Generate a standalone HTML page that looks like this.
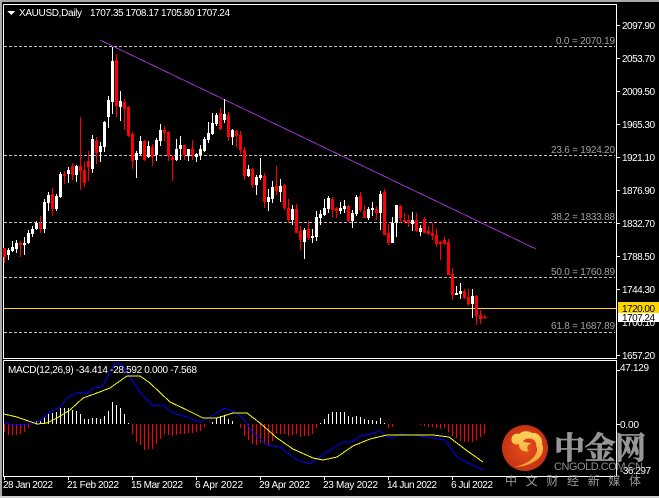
<!DOCTYPE html>
<html><head><meta charset="utf-8"><title>XAUUSD Daily</title>
<style>
html,body{margin:0;padding:0;background:#000;width:659px;height:498px;overflow:hidden}
svg{display:block}
text{font-family:"Liberation Sans","DejaVu Sans",sans-serif;font-size:10px;fill:#fff}
.f{fill:#a0a0a0}
.c{fill:#969696;stroke:#969696;stroke-width:.7px;font-family:"Noto Serif CJK SC","Noto Sans CJK SC",serif;font-weight:700}
</style></head><body>
<svg width="659" height="498" viewBox="0 0 659 498" xmlns="http://www.w3.org/2000/svg">
<rect width="659" height="498" fill="#000"/>
<g shape-rendering="crispEdges" fill="none">
<rect x="0" y="0" width="659" height="2" fill="#a8a8a8"/>
<rect x="0" y="0" width="2" height="498" fill="#a8a8a8"/>
<rect x="0" y="496" width="659" height="2" fill="#d0d0d0"/>
<path stroke="#fff" d="M3.5 4.5H616.5V358.5H3.5V4.5M3.5 360.5H616.5V476.5H3.5V360.5"/>
<path stroke="#fff" d="M617 25.5h3M617 58.5h3M617 91.5h3M617 124.5h3M617 157.5h3M617 190.5h3M617 223.5h3M617 256.5h3M617 289.5h3M617 355.5h3M617 370.5h3M617 424.5h3M4.5 477v3M68.5 477v3M132.5 477v3M196.5 477v3M260.5 477v3M324.5 477v3M388.5 477v3M452.5 477v3"/>
<path stroke="#c0c0c0" stroke-dasharray="3 2" d="M4 46.5H615M4 155.5H615M4 222.5H615M4 277.5H615M4 332.5H615"/>
<path stroke="#ffd700" d="M4 308.5H616"/>
<path stroke="#9932cc" d="M100 40L536 249"/>
<!-- white wicks -->
<path stroke="#fff" d="M8.5 248V260M12.5 241V252M16.5 240V253M24.5 237V255M28.5 230V244M32.5 226V237M36.5 221V230M44.5 199V233M48.5 192V211M56.5 194V211M60.5 172V198M68.5 167V183M76.5 165V182M92.5 135V173M100.5 142V162M104.5 121V152M108.5 96V128M112.5 47V114M120.5 91V121M136.5 151V178M140.5 136V155M148.5 141V158M156.5 138V161M160.5 124V146M176.5 139V161M180.5 136V160M188.5 149V161M196.5 153V162M200.5 145V160M204.5 137V152M208.5 122V143M212.5 113V135M216.5 113V126M224.5 99V123M232.5 129V145M248.5 165V177M256.5 175V195M260.5 158V180M268.5 189V211M272.5 181V203M280.5 179V202M292.5 205V225M304.5 228V259M312.5 229V243M316.5 211V241M320.5 210V225M324.5 199V216M328.5 196V213M340.5 202V214M344.5 200V213M352.5 210V228M356.5 195V216M368.5 207V220M372.5 202V216M380.5 191V230M392.5 217V243M396.5 205V237M412.5 212V231M420.5 225V236M456.5 286V295M460.5 283V299M472.5 289V318"/>
<!-- white bodies -->
<path stroke="#fff" stroke-width="3" d="M8.5 250V255M12.5 247V251M16.5 243V249M24.5 243V245M28.5 233V243M32.5 229V234M36.5 223V229M44.5 202V229M48.5 195V203M56.5 196V209M60.5 174V197M68.5 170V174M76.5 166V175M92.5 139V169M100.5 146V152M104.5 122V147M108.5 100V117M112.5 61V102M120.5 101V107M136.5 153V160M140.5 141V154M148.5 146V157M156.5 140V155M160.5 130V141M176.5 149V160M180.5 145V149M188.5 149V156M196.5 154V157M200.5 149V155M204.5 139V151M208.5 133V140M212.5 123V134M216.5 115V124M224.5 114V120M232.5 130V137M248.5 169V176M256.5 177V185M260.5 175V178M268.5 197V202M272.5 187V199M280.5 186V192M292.5 209V220M304.5 230V242M312.5 236V238M316.5 217V237M320.5 214V218M324.5 208V215M328.5 198V209M340.5 208V211M344.5 206V209M352.5 213V221M356.5 197V214M368.5 209V218M372.5 208V210M380.5 194V213M392.5 223V243M396.5 205V223M412.5 220V224M420.5 228V232M456.5 293V295M460.5 291V294M472.5 296V304"/>
<!-- red wicks -->
<path stroke="#f00" d="M4.5 248V263M20.5 241V257M40.5 216V233M52.5 188V216M64.5 171V184M72.5 163V180M80.5 117V190M84.5 162V187M88.5 151V181M96.5 137V164M116.5 54V117M124.5 99V130M128.5 106V137M132.5 132V169M144.5 140V161M152.5 144V166M164.5 126V141M168.5 131V161M172.5 156V181M184.5 145V160M192.5 140V160M220.5 108V130M228.5 112V141M236.5 130V147M240.5 131V154M244.5 147V180M252.5 168V188M264.5 173V208M276.5 166V195M284.5 184V210M288.5 199V223M296.5 204V233M300.5 226V250M308.5 221V240M332.5 197V217M336.5 207V218M348.5 205V222M360.5 192V212M364.5 205V218M376.5 206V220M384.5 189V235M388.5 224V245M400.5 205V223M404.5 213V223M408.5 215V227M416.5 213V232M424.5 217V233M428.5 226V235M432.5 223V240M436.5 229V247M440.5 241V260M444.5 237V245M448.5 239V275M452.5 268V300M464.5 289V299M468.5 289V306M476.5 295V325M480.5 310V324M484.5 315V319"/>
<!-- red bodies -->
<path stroke="#f00" stroke-width="3" d="M4.5 248V257M20.5 243V245M40.5 223V229M52.5 194V209M64.5 174V176M72.5 166V175M80.5 166V171M84.5 170V183M88.5 161V167M96.5 141V153M116.5 60V106M124.5 102V109M128.5 107V136M132.5 134V161M144.5 141V160M152.5 147V157M164.5 130V133M168.5 132V156M172.5 157V160M184.5 145V155M192.5 149V155M220.5 113V129M228.5 115V137M236.5 131V136M240.5 135V150M244.5 150V176M252.5 169V185M264.5 176V202M276.5 186V191M284.5 185V208M288.5 208V220M296.5 209V233M300.5 231V240M308.5 229V238M332.5 199V210M336.5 208V211M348.5 206V221M360.5 196V210M364.5 211V218M376.5 209V213M384.5 192V235M388.5 233V243M400.5 206V218M404.5 220V222M408.5 220V223M416.5 220V231M424.5 219V233M428.5 231V234M432.5 233V236M436.5 235V244M440.5 242V244M444.5 240V244M448.5 242V275M452.5 274V295M464.5 291V298M468.5 297V304M476.5 296V316M480.5 315V319"/>
<path stroke="#f00" d="M482 317.5h5"/>
<!-- MACD histogram -->
<path stroke="#fff" d="M36.5 424V421M40.5 424V421M44.5 424V417M48.5 424V413M52.5 424V413M56.5 424V412M60.5 424V408M64.5 424V408M68.5 424V408M72.5 424V410M76.5 424V411M80.5 424V414M84.5 424V419M88.5 424V419M92.5 424V418M96.5 424V418M100.5 424V419M104.5 424V416M108.5 424V411M112.5 424V402M116.5 424V405M120.5 424V408M124.5 424V414M128.5 424V423M212.5 424V422M216.5 424V418M220.5 424V416M224.5 424V415M228.5 424V419M232.5 424V421M320.5 424V423M324.5 424V419M328.5 424V414M332.5 424V412M336.5 424V412M340.5 424V412M344.5 424V412M348.5 424V416M352.5 424V417M356.5 424V416M360.5 424V417M364.5 424V419M368.5 424V420M372.5 424V420M376.5 424V421M380.5 424V418M384.5 424V423"/>
<path stroke="#f00" d="M4.5 424V432M8.5 424V435M12.5 424V435M16.5 424V435M20.5 424V434M24.5 424V432M28.5 424V428M132.5 424V434M136.5 424V442M140.5 424V445M144.5 424V450M148.5 424V449M152.5 424V449M156.5 424V444M160.5 424V439M164.5 424V434M168.5 424V435M172.5 424V436M176.5 424V435M180.5 424V434M184.5 424V434M188.5 424V433M192.5 424V433M196.5 424V432M200.5 424V431M204.5 424V427M240.5 424V428M244.5 424V436M248.5 424V440M252.5 424V444M256.5 424V445M260.5 424V443M264.5 424V444M268.5 424V445M272.5 424V441M276.5 424V434M280.5 424V434M284.5 424V434M288.5 424V436M292.5 424V435M296.5 424V434M300.5 424V437M304.5 424V436M308.5 424V436M312.5 424V434M316.5 424V428M388.5 424V428M392.5 424V427M420.5 424V425M424.5 424V426M428.5 424V427M432.5 424V427M436.5 424V428M440.5 424V429M444.5 424V428M448.5 424V432M452.5 424V436M456.5 424V438M460.5 424V441M464.5 424V442M468.5 424V442M472.5 424V442M476.5 424V440M480.5 424V437M484.5 424V434"/>
<!-- MACD lines -->
<path stroke="#0000ff" d="M4 422L12 425L32 424L40 421L50 412L60 407L68 397L80 392L87 394L93 388L102 387L110 372L115 363L122 365L132 380L140 392L153 406L163 405L173 413L187 417L197 421L203 421L213 415L225 408L235 412L243 418L253 433L267 445L280 447L297 460L310 464L327 452L343 442L352 442L360 436L370 434L380 431L387 437L393 438L400 434L413 435L427 437L445 440L457 457L472 465L484 470"/>
<path stroke="#ffff00" d="M4 414L17 417L37 424L47 423L57 418L70 410L83 398L97 393L110 388L127 376L140 376L150 383L170 402L187 410L203 418L217 418L233 413L247 413L260 423L277 438L293 449L313 458L323 460L337 457L353 446L370 439L387 435L433 435L449 437L466 450L483 462"/>
<path d="M7 11h8l-4 4z" fill="#fff"/>
<rect x="618" y="302" width="41" height="11" fill="#ffd700"/>
<rect x="618" y="313" width="41" height="9" fill="#fff"/>
</g>
<text x="19" y="16" textLength="63">XAUUSD,Daily</text>
<text x="90" y="16" textLength="140">1707.35 1708.17 1705.80 1707.24</text>
<text x="622" y="29" textLength="33">2097.90</text>
<text x="622" y="62" textLength="33">2053.70</text>
<text x="622" y="95" textLength="33">2009.50</text>
<text x="622" y="128" textLength="33">1965.30</text>
<text x="622" y="161" textLength="33">1921.10</text>
<text x="622" y="194" textLength="33">1876.90</text>
<text x="622" y="227" textLength="33">1832.70</text>
<text x="622" y="260" textLength="33">1788.50</text>
<text x="622" y="293" textLength="33">1744.30</text>
<text x="622" y="326" textLength="33">1700.10</text>
<rect x="618" y="313" width="41" height="9" fill="#fff"/>
<text x="622" y="359" textLength="33">1657.20</text>
<text x="622" y="312" textLength="33" style="fill:#000">1720.00</text>
<text x="622" y="321" textLength="33" style="fill:#000">1707.24</text>
<text class="f" x="556" y="44" textLength="59">0.0 = 2070.19</text>
<text class="f" x="551" y="153" textLength="64">23.6 = 1924.20</text>
<text class="f" x="551" y="220" textLength="64">38.2 = 1833.88</text>
<text class="f" x="551" y="275" textLength="64">50.0 = 1760.89</text>
<text class="f" x="551" y="329" textLength="64">61.8 = 1687.89</text>
<text x="8" y="373" textLength="189">MACD(12,26,9) -34.414 -28.592 0.000 -7.568</text>
<text x="620" y="371" textLength="29">47.129</text>
<text x="620" y="428" textLength="19">0.00</text>
<text x="620" y="474" textLength="31">-36.297</text>
<text x="3" y="488" textLength="50">28 Jan 2022</text>
<text x="67" y="488" textLength="52">21 Feb 2022</text>
<text x="131" y="488" textLength="52">15 Mar 2022</text>
<text x="195" y="488" textLength="48">6 Apr 2022</text>
<text x="259" y="488" textLength="51">29 Apr 2022</text>
<text x="323" y="488" textLength="55">23 May 2022</text>
<text x="387" y="488" textLength="50">14 Jun 2022</text>
<text x="451" y="488" textLength="42">6 Jul 2022</text>
<!-- watermark -->
<defs><radialGradient id="g" cx="50%" cy="50%" r="55%"><stop offset="0" stop-color="#e8501c"/><stop offset="1" stop-color="#c22f12"/></radialGradient>
<linearGradient id="y" x1="0" y1="0" x2="0" y2="1"><stop offset="0" stop-color="#fbd35c"/><stop offset="1" stop-color="#f7a030"/></linearGradient></defs>
<circle cx="525" cy="448" r="23" fill="url(#g)"/>
<path fill="url(#y)" d="M514 467C525 465 535 459 537 451C538 446 534 443 530 444C527 445 526 449 529 451C524 453 518 449 519 444C514 446 510 442 512 437C513 434 517 433 519 434C522 431 528 430 532 433C538 432 543 438 542 444C545 450 541 458 535 461C529 465 522 467 514 467Z"/>
<path fill="#d8431a" d="M523 441C527 437 534 438 536 443C537 447 535 450 533 452C534 448 533 444 530 443C527 442 525 443 523 441Z"/>
<text class="c" x="554" y="459" style="font-size:31px" textLength="92">中金网</text>
<text x="554" y="470" textLength="89" style="fill:#8c8c8c;font-size:11px">CNGOLD.COM.CN</text>
<text x="505" y="485" style="fill:#999;font-family:'Noto Sans CJK SC',sans-serif;font-size:12px" textLength="136">中文财经新媒体</text>
</svg>
</body></html>
